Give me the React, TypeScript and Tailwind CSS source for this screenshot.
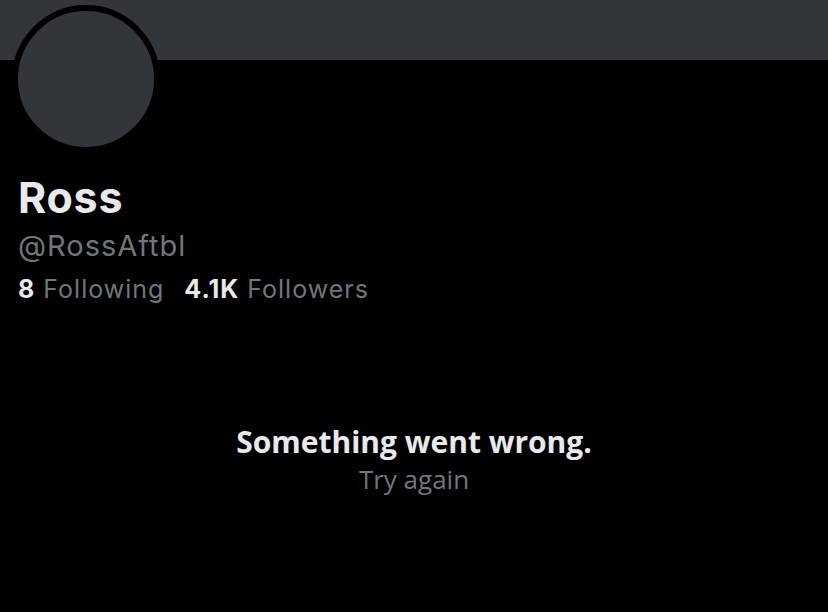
export default function App() {
  return (
    <div
      className="w-[828px] h-[612px] bg-black overflow-hidden"
      style={{ fontFamily: '"Open Sans", "Liberation Sans", sans-serif' }}
    >
      <div className="h-[60px] bg-[#333639]" />
      <div className="px-[18px]" style={{ fontFamily: 'Inter, "Open Sans", sans-serif' }}>
        <div className="-mt-[55px] -ml-[6px] w-[148px] h-[148px] rounded-full border-[6px] border-black bg-[#333639]" />
        <div className="mt-[20px] text-[43px] leading-[48px] font-bold text-[#e7e9ea] tracking-[0.75px]">Ross</div>
        <div className="mt-[5px] text-[29px] leading-[40px] text-[#71767b] tracking-[1px]">@RossAftbl</div>
        <div className="mt-[6px] flex gap-[20px] text-[25px] leading-[34px] tracking-[1px]">
          <span>
            <span className="font-bold text-[#e7e9ea]">8</span>
            <span className="text-[#71767b]"> Following</span>
          </span>
          <span>
            <span className="font-bold text-[#e7e9ea]">4.1K</span>
            <span className="text-[#71767b]"> Followers</span>
          </span>
        </div>
      </div>
      <div className="mt-[117px] flex flex-col items-center">
        <div className="text-[30px] leading-[38px] font-bold text-[#e7e9ea]">Something went wrong.</div>
        <div className="text-[26px] leading-[36px] text-[#71767b]">Try again</div>
      </div>
    </div>
  );
}
